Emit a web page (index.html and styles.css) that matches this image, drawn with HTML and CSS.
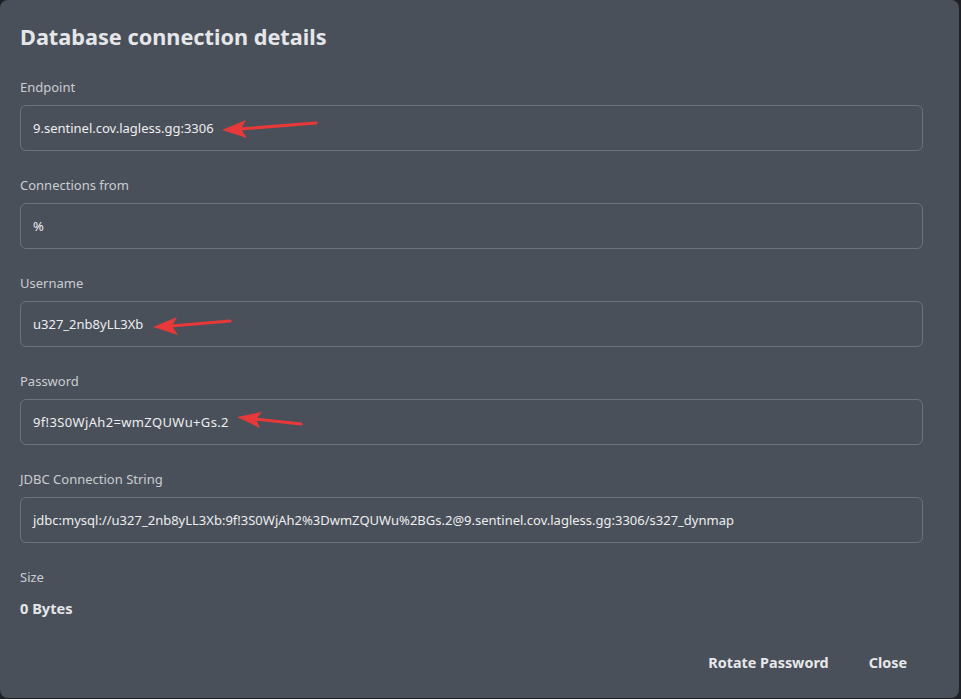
FILE: index.html
```html
<!DOCTYPE html>
<html lang="en">
<head>
<meta charset="utf-8">
<title>Database connection details</title>
<link rel="stylesheet" href="styles.css">
</head>
<body>
<div class="dialog">
  <h1 class="dialog-title">Database connection details</h1>

  <div class="field">
    <label class="field-label">Endpoint</label>
    <div class="field-input">
      <span class="value">9.sentinel.cov.lagless.gg:3306</span>
      <svg class="arrow arrow-endpoint" width="110" height="24" viewBox="0 0 110 24">
        <line x1="20" y1="12" x2="96" y2="6" stroke="#e8393a" stroke-width="3.2" stroke-linecap="round"/>
        <polygon points="2,13 26,3 21,12 27,21" fill="#e8393a"/>
      </svg>
    </div>
  </div>

  <div class="field">
    <label class="field-label">Connections from</label>
    <div class="field-input"><span class="value">%</span></div>
  </div>

  <div class="field">
    <label class="field-label">Username</label>
    <div class="field-input">
      <span class="value">u327_2nb8yLL3Xb</span>
      <svg class="arrow arrow-user" width="90" height="24" viewBox="0 0 90 24">
        <line x1="20" y1="12" x2="79" y2="7" stroke="#e8393a" stroke-width="3.2" stroke-linecap="round"/>
        <polygon points="2,13 26,3 21,12 27,21" fill="#e8393a"/>
      </svg>
    </div>
  </div>

  <div class="field">
    <label class="field-label">Password</label>
    <div class="field-input">
      <span class="value value-wide">9f!3S0WjAh2=wmZQUWu+Gs.2</span>
      <svg class="arrow arrow-pass" width="80" height="24" viewBox="0 0 80 24">
        <line x1="20" y1="10" x2="66" y2="15" stroke="#e8393a" stroke-width="3.2" stroke-linecap="round"/>
        <polygon points="2,8 27,3 21,10 25,19" fill="#e8393a"/>
      </svg>
    </div>
  </div>

  <div class="field">
    <label class="field-label">JDBC Connection String</label>
    <div class="field-input"><span class="value">jdbc:mysql://u327_2nb8yLL3Xb:9f!3S0WjAh2%3DwmZQUWu%2BGs.2@9.sentinel.cov.lagless.gg:3306/s327_dynmap</span></div>
  </div>

  <div class="field field-size">
    <label class="field-label">Size</label>
    <div class="size-value">0 Bytes</div>
  </div>

  <div class="actions">
    <button class="btn" type="button">Rotate Password</button>
    <button class="btn" type="button">Close</button>
  </div>
</div>
</body>
</html>
```

FILE: styles.css
```css
* {
  box-sizing: border-box;
}

html,
body {
  margin: 0;
  height: 100%;
}

body {
  background: #1e2024;
  font-family: "Noto Sans", "Open Sans", sans-serif;
  color: #dfe2e6;
}

.dialog {
  width: 959px;
  height: 698px;
  background: #4a5059;
  border-radius: 8px;
  padding: 19px 36px 0 20px;
  display: flex;
  flex-direction: column;
}

.dialog-title {
  margin: 0;
  font-size: 21.7px;
  line-height: 36px;
  font-weight: 700;
  color: #e4e6e9;
}

.field {
  display: flex;
  flex-direction: column;
  margin-top: 24px;
}

.dialog-title + .field {
  margin-top: 22px;
}

.field-label {
  font-size: 13px;
  line-height: 20px;
  color: #c9cdd2;
  margin-bottom: 8px;
}

.field-input {
  position: relative;
  height: 46px;
  border: 1px solid #6d737d;
  border-radius: 6px;
  padding: 0 12px;
  display: flex;
  align-items: center;
  font-size: 13px;
  color: #eceef0;
}

.value {
  white-space: nowrap;
}

.value-wide {
  letter-spacing: 0.35px;
}

.arrow {
  position: absolute;
  top: 50%;
}

.arrow-endpoint {
  left: 199px;
  margin-top: -11px;
}

.arrow-user {
  left: 130px;
  margin-top: -10px;
}

.arrow-pass {
  left: 214px;
  margin-top: -13px;
}

.field-size .field-label {
  margin-bottom: 10px;
}

.size-value {
  font-size: 14.6px;
  font-weight: 700;
  line-height: 22px;
  color: #e4e6e9;
}

.actions {
  display: flex;
  justify-content: flex-end;
  gap: 8px;
  margin-top: 26px;
}

.btn {
  font: inherit;
  font-size: 14.4px;
  font-weight: 700;
  color: #e6e8eb;
  background: transparent;
  border: 0;
  padding: 8px 16px;
  line-height: 20px;
  cursor: pointer;
}
```
